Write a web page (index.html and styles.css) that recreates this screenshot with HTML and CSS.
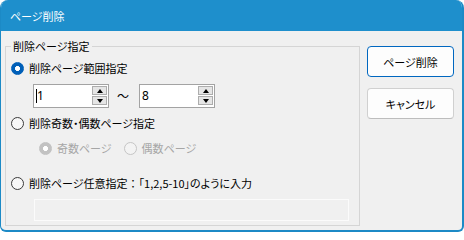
FILE: index.html
```html
<!DOCTYPE html>
<html lang="ja">
<head>
<meta charset="utf-8">
<title>ページ削除</title>
<link rel="stylesheet" href="styles.css">
</head>
<body>
<div class="window">
  <div class="titlebar"><span class="title">ページ削除</span></div>
  <div class="content">
    <fieldset class="group">
      <legend class="legend">削除ページ指定</legend>
      <div class="radio-row">
        <span class="radio checked"></span><span class="label">削除ページ範囲指定</span>
      </div>
      <div class="spin-row">
        <div class="spin">
          <div class="spin-text"><span class="caret"></span>1</div>
          <div class="spin-btns"><span class="spin-btn"><span class="tri up"></span></span><span class="spin-btn"><span class="tri down"></span></span></div>
        </div>
        <span class="tilde">〜</span>
        <div class="spin">
          <div class="spin-text">8</div>
          <div class="spin-btns"><span class="spin-btn"><span class="tri up"></span></span><span class="spin-btn"><span class="tri down"></span></span></div>
        </div>
      </div>
      <div class="radio-row row2">
        <span class="radio"></span><span class="label">削除奇数・偶数ページ指定</span>
      </div>
      <div class="radio-row sub-row">
        <span class="radio disabled checked-disabled"></span><span class="label muted">奇数ページ</span>
        <span class="radio disabled second"></span><span class="label muted">偶数ページ</span>
      </div>
      <div class="radio-row row3">
        <span class="radio"></span><span class="label">削除ページ任意指定<span class="fullwidth">：</span>「1,2,5-10」のように入力</span>
      </div>
      <div class="text-input"></div>
    </fieldset>
    <div class="buttons">
      <button class="btn default" type="button">ページ削除</button>
      <button class="btn" type="button">キャンセル</button>
    </div>
  </div>
</div>
</body>
</html>
```
FILE: styles.css
```css
html, body {
  margin: 0;
  padding: 0;
  background: #ffffff;
}
body {
  font-family: "Noto Sans CJK JP", "Noto Sans", sans-serif;
  font-size: 11px;
  font-feature-settings: "palt";
  color: #000;
}
.window {
  width: 464px;
  height: 232px;
  box-sizing: border-box;
  border: 1px solid #1c8ac6;
  border-top: 0;
  border-right-width: 2px;
  border-bottom-width: 2px;
  border-radius: 8px 8px 6px 6px;
  background: #f0f0f0;
  display: flex;
  flex-direction: column;
  overflow: hidden;
}
.titlebar {
  height: 31px;
  flex: none;
  background: #1e8fcc;
  display: flex;
  align-items: center;
  padding-left: 10px;
  margin-left: -1px;
  margin-right: -2px;
}
.title {
  color: #fff;
  font-size: 11px;
  line-height: 14px;
  margin-top: 0;
}
.content {
  flex: 1;
  display: flex;
  align-items: flex-start;
  padding: 8px 8px 0 4px;
}
.group {
  margin: 0;
  width: 355px;
  box-sizing: border-box;
  border: 1px solid #d5d5d5;
  padding: 0 0 4px 5px;
  min-width: 0;
}
.legend {
  padding: 0 2px;
  line-height: 14px;
  font-size: 11px;
}
.radio-row {
  display: flex;
  align-items: center;
  height: 20px;
  margin-top: 5px;
}
.row2 { margin-top: 5px; }
.sub-row { margin-top: 5px; padding-left: 28px; }
.row3 { margin-top: 15px; }
.radio {
  width: 13px;
  height: 13px;
  box-sizing: border-box;
  border-radius: 50%;
  border: 1px solid #3b3b3b;
  background: #f7f7f7;
  flex: none;
  margin-right: 5px;
}
.radio.checked {
  border-color: #005fb8;
  background: radial-gradient(circle, #fff 0 2.2px, #005fb8 2.8px);
}
.radio.disabled {
  border-color: #c5c5c5;
  background: #f3f3f3;
}
.radio.checked-disabled {
  border-color: #c2c2c2;
  background: radial-gradient(circle, #fff 0 2.2px, #c2c2c2 2.8px);
}
.radio.second { margin-left: 12px; }
.label { line-height: 14px; white-space: nowrap; }
.fullwidth { font-feature-settings: normal; }
.muted { color: #a6a6a6; }
.spin-row {
  display: flex;
  align-items: center;
  margin-top: 6px;
  padding-left: 22px;
}
.spin {
  width: 76px;
  height: 24px;
  box-sizing: border-box;
  border: 1px solid #a3a3a3;
  background: #fff;
  display: flex;
}
.spin-text {
  flex: 1;
  display: flex;
  align-items: center;
  padding-left: 2px;
  font-family: "Noto Sans", "Liberation Sans", sans-serif;
  font-size: 12px;
  line-height: 14px;
}
.caret {
  display: inline-block;
  width: 1px;
  height: 14px;
  background: #000;
  margin-right: 0;
}
.spin-btns {
  width: 15px;
  display: flex;
  flex-direction: column;
  gap: 1px;
  margin: 1px 1px 2px 0;
}
.spin-btn {
  flex: 1;
  box-sizing: border-box;
  border: 1px solid #adadad;
  background: #e5e5e5;
  display: flex;
  align-items: center;
  justify-content: center;
}
.tri {
  width: 0;
  height: 0;
  border-left: 3px solid transparent;
  border-right: 3px solid transparent;
}
.tri.up { border-bottom: 4px solid #000; }
.tri.down { border-top: 4px solid #000; }
.tilde {
  margin: 0 10px 0 8px;
  width: 12px;
  font-size: 12px;
  line-height: 14px;
}
.text-input {
  margin-top: 6px;
  margin-left: 23px;
  width: 315px;
  height: 22px;
  box-sizing: border-box;
  border: 1px solid #fbfbfb;
  background: #f0f0f0;
}
.buttons {
  margin-left: 7px;
  margin-top: 7px;
  display: flex;
  flex-direction: column;
  gap: 11px;
}
.btn {
  width: 87px;
  height: 31px;
  box-sizing: border-box;
  border: 1px solid #d0d0d0;
  border-bottom-color: #bdbdbd;
  border-radius: 4px;
  background: #fdfdfd;
  font-family: "Noto Sans CJK JP", "Noto Sans", sans-serif;
  font-feature-settings: "palt";
  font-size: 11px;
  color: #000;
  padding: 0;
  line-height: 14px;
}
.btn.default {
  border: 1px solid #0067c0;
}
```
